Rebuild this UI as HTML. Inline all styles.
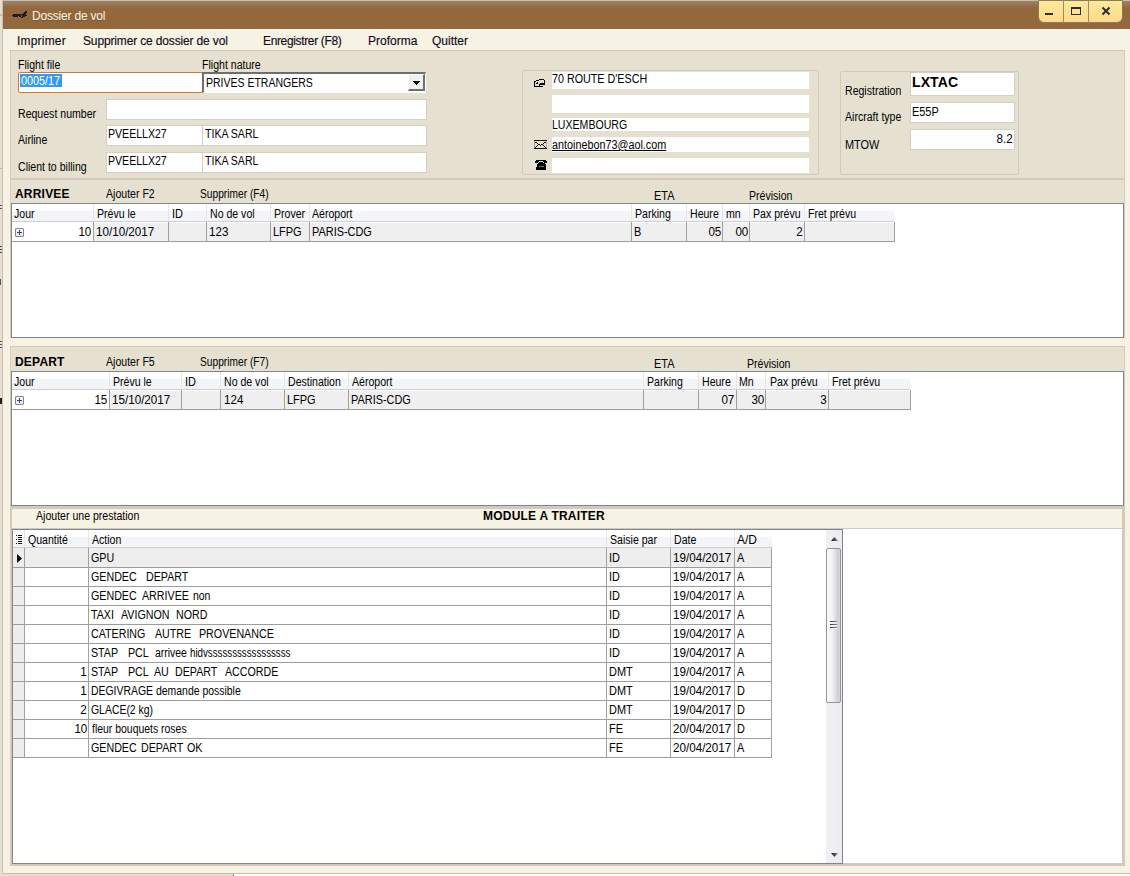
<!DOCTYPE html><html><head><meta charset="utf-8"><style>
html,body{margin:0;padding:0;width:1130px;height:876px;overflow:hidden;background:#E6E0D1;}
body{position:relative;font-family:'Liberation Sans', sans-serif;color:#000;}
div,span,svg{position:absolute;}
span{white-space:pre;}
</style></head><body>
<div style="left:2px;top:0px;width:1128px;height:874px;background:#C9BCB1"></div>
<div style="left:3px;top:1px;width:1127px;height:872px;background:#F8F2E2"></div>
<div style="left:233px;top:874px;width:897px;height:2px;background:#fff;border-left:1px solid #7C8494"></div>
<div style="left:0px;top:205px;width:2px;height:1px;background:#555"></div>
<div style="left:0px;top:208px;width:2px;height:1px;background:#555"></div>
<div style="left:0px;top:246px;width:2px;height:1px;background:#444"></div>
<div style="left:0px;top:249px;width:2px;height:1px;background:#444"></div>
<div style="left:0px;top:252px;width:2px;height:1px;background:#444"></div>
<div style="left:0px;top:279px;width:1px;height:6px;background:#555"></div>
<div style="left:0px;top:341px;width:2px;height:1px;background:#555"></div>
<div style="left:0px;top:344px;width:2px;height:1px;background:#555"></div>
<div style="left:0px;top:347px;width:2px;height:1px;background:#555"></div>
<div style="left:0px;top:398px;width:2px;height:6px;background:#222"></div>
<div style="left:0px;top:168px;width:2px;height:1px;background:#BDB3A8"></div>
<div style="left:0px;top:14px;width:2px;height:2px;background:#C7BDB2"></div>
<div style="left:3px;top:1px;width:1127px;height:28px;background:linear-gradient(#9D8466 0px,#98775A 3px,#93683D 7px,#93683D 100%)"></div>
<span style="top:10px;font-size:12px;line-height:12px;color:#F6F0DE;letter-spacing:-0.2px;left:32px;-webkit-text-stroke:0.1px #F6F0DE;text-shadow:0 1px 1px rgba(60,40,20,0.35);">Dossier de vol</span>
<div style="left:25px;top:11px;width:2px;height:1px;background:#1E1E22"></div>
<div style="left:24px;top:12px;width:3px;height:1px;background:#1E1E22"></div>
<div style="left:23px;top:13px;width:3px;height:1px;background:#1E1E22"></div>
<div style="left:13px;top:14px;width:13px;height:1px;background:#1E1E22"></div>
<div style="left:12px;top:15px;width:9px;height:1px;background:#1E1E22"></div>
<div style="left:22px;top:15px;width:5px;height:1px;background:#1E1E22"></div>
<div style="left:13px;top:16px;width:5px;height:1px;background:#1E1E22"></div>
<div style="left:19px;top:16px;width:2px;height:1px;background:#1E1E22"></div>
<div style="left:22px;top:16px;width:3px;height:1px;background:#1E1E22"></div>
<div style="left:21px;top:17px;width:2px;height:1px;background:#1E1E22"></div>
<div style="left:1038px;top:0px;width:83px;height:21px;border:1px solid #8E7B5E;border-radius:0 0 6px 6px;background:linear-gradient(#FFEA9E,#FFD888);"></div>
<div style="left:1063px;top:0px;width:1px;height:23px;background:#9C8A68"></div>
<div style="left:1088px;top:0px;width:1px;height:23px;background:#9C8A68"></div>
<div style="left:1045px;top:13px;width:8px;height:2px;background:#2A2E3E"></div>
<div style="left:1071px;top:7px;width:8px;height:5px;border:1px solid #2A2E3E;border-top-width:2px"></div>
<svg style="left:1101px;top:6px" width="10" height="10" viewBox="0 0 10 10"><path d="M1.5 1.5 L8.5 8.5 M8.5 1.5 L1.5 8.5" stroke="#2A2E3E" stroke-width="2"/></svg>

<div style="left:3px;top:29px;width:1127px;height:21px;background:#F7F3E4;border-top:1px solid #F9F6EA;box-sizing:border-box"></div>
<span style="top:35px;font-size:12px;line-height:12px;color:#140A1A;letter-spacing:0.2px;left:17px;-webkit-text-stroke:0.15px #140A1A;">Imprimer</span>
<span style="top:35px;font-size:12px;line-height:12px;color:#140A1A;letter-spacing:-0.15px;left:83px;-webkit-text-stroke:0.15px #140A1A;">Supprimer ce dossier de vol</span>
<span style="top:35px;font-size:12px;line-height:12px;color:#140A1A;letter-spacing:-0.35px;left:263px;-webkit-text-stroke:0.15px #140A1A;">Enregistrer (F8)</span>
<span style="top:35px;font-size:12px;line-height:12px;color:#140A1A;left:368px;-webkit-text-stroke:0.15px #140A1A;">Proforma</span>
<span style="top:35px;font-size:12px;line-height:12px;color:#140A1A;left:432px;-webkit-text-stroke:0.15px #140A1A;">Quitter</span>
<div style="left:10px;top:50px;width:1115px;height:128px;background:#E6E0D1;border-top:1px solid #CFC5BA;border-left:1px solid #D5CCC1;border-right:1px solid #D5CCC1;box-sizing:border-box"></div>
<div style="left:10px;top:178px;width:1115px;height:2px;background:#D3C9BD"></div>
<span style="top:59px;font-size:12px;line-height:12px;left:18px;transform:scaleX(0.88);transform-origin:left;">Flight file</span>
<span style="top:59px;font-size:12px;line-height:12px;left:202px;transform:scaleX(0.88);transform-origin:left;">Flight nature</span>
<div style="left:18px;top:72px;width:185px;height:21px;background:#fff;border:1px solid #D27A2C;box-sizing:border-box;border-radius:2px"></div>
<div style="left:20px;top:74px;width:42px;height:13px;background:#3399FF"></div>
<span style="top:75px;font-size:12px;line-height:12px;color:#fff;left:21px;transform:scaleX(0.9);transform-origin:left;">0005/17</span>
<div style="left:202px;top:72px;width:224px;height:21px;background:#fff;border-top:2px solid #6E6E6E;border-left:2px solid #6E6E6E;border-right:1px solid #fff;border-bottom:1px solid #fff;box-sizing:border-box"></div>
<div style="left:408px;top:74px;width:17px;height:17px;background:#EFEFEF;border-right:2px solid #6E6E6E;border-bottom:2px solid #6E6E6E;border-left:1px solid #fff;border-top:1px solid #fff;box-sizing:border-box"></div>
<svg style="left:413px;top:81px" width="7" height="4" viewBox="0 0 7 4" shape-rendering="crispEdges"><path d="M0 0h7v1h-7z M1 1h5v1h-5z M2 2h3v1h-3z M3 3h1v1h-1z" fill="#000"/></svg>
<span style="top:77px;font-size:12px;line-height:12px;left:206px;transform:scaleX(0.875);transform-origin:left;">PRIVES ETRANGERS</span>
<span style="top:108px;font-size:12px;line-height:12px;left:18px;transform:scaleX(0.88);transform-origin:left;">Request number</span>
<div style="left:106px;top:99px;width:321px;height:21px;background:#fff;border:1px solid #D6CEC2;box-sizing:border-box;"></div>
<span style="top:134px;font-size:12px;line-height:12px;left:18px;transform:scaleX(0.88);transform-origin:left;">Airline</span>
<div style="left:106px;top:125px;width:97px;height:21px;background:#fff;border:1px solid #D6CEC2;box-sizing:border-box;"></div>
<div style="left:202px;top:125px;width:225px;height:21px;background:#fff;border:1px solid #D6CEC2;box-sizing:border-box;"></div>
<span style="top:128px;font-size:12px;line-height:12px;left:108px;transform:scaleX(0.88);transform-origin:left;">PVEELLX27</span>
<span style="top:128px;font-size:12px;line-height:12px;left:205px;transform:scaleX(0.88);transform-origin:left;">TIKA SARL</span>
<span style="top:161px;font-size:12px;line-height:12px;left:18px;transform:scaleX(0.88);transform-origin:left;">Client to billing</span>
<div style="left:106px;top:152px;width:97px;height:21px;background:#fff;border:1px solid #D6CEC2;box-sizing:border-box;"></div>
<div style="left:202px;top:152px;width:225px;height:21px;background:#fff;border:1px solid #D6CEC2;box-sizing:border-box;"></div>
<span style="top:155px;font-size:12px;line-height:12px;left:108px;transform:scaleX(0.88);transform-origin:left;">PVEELLX27</span>
<span style="top:155px;font-size:12px;line-height:12px;left:205px;transform:scaleX(0.88);transform-origin:left;">TIKA SARL</span>
<div style="left:522px;top:70px;width:297px;height:105px;border:1px solid #D2C9BC;border-radius:2px;box-sizing:border-box"></div>
<div style="left:552px;top:72px;width:257px;height:17px;background:#fff"></div>
<div style="left:552px;top:95px;width:257px;height:18px;background:#fff"></div>
<div style="left:552px;top:118px;width:257px;height:13px;background:#fff"></div>
<div style="left:552px;top:137px;width:257px;height:15px;background:#fff"></div>
<div style="left:552px;top:158px;width:257px;height:15px;background:#fff"></div>
<span style="top:73px;font-size:12px;line-height:12px;left:552px;transform:scaleX(0.895);transform-origin:left;">70 ROUTE D'ESCH</span>
<span style="top:119px;font-size:12px;line-height:12px;left:552px;transform:scaleX(0.88);transform-origin:left;">LUXEMBOURG</span>
<span style="top:139px;font-size:12px;line-height:12px;left:552px;transform:scaleX(0.9);transform-origin:left;text-decoration:underline;">antoinebon73@aol.com</span>
<svg style="left:533px;top:78px" width="13" height="10" viewBox="0 0 13 10" shape-rendering="crispEdges">
<path d="M1 3h2v1h-2z M3 2h3v1h-3z M6 1h5v1h-5z M11 2h1v5h-1z M1 4h1v4h-1z M1 8h9v1h-9z M7 5h4v2h-4z M6 6h1v2h-1z M3 5h2v1h-2z M4 4h1v1h-1z" fill="#000"/>
</svg>
<svg style="left:0;top:0" width="1130" height="876" shape-rendering="crispEdges"><path d="M534 140h13v1h-13zM534 148h13v1h-13zM535 142h2v1h-2zM544 142h2v1h-2zM537 143h1v1h-1zM543 143h1v1h-1zM538 144h2v1h-2zM541 144h2v1h-2zM537 145h1v1h-1zM540 145h1v1h-1zM543 145h1v1h-1zM536 146h1v1h-1zM544 146h1v1h-1zM535 147h1v1h-1zM545 147h1v1h-1z" fill="#111"/></svg>
<svg style="left:0;top:0" width="1130" height="876" shape-rendering="crispEdges"><path d="M534 141h1v1h-1zM534 142h1v1h-1zM534 143h1v1h-1zM534 144h1v1h-1zM534 145h1v1h-1zM534 146h1v1h-1zM534 147h1v1h-1z" fill="#A8A29A"/></svg>
<svg style="left:0;top:0" width="1130" height="876" shape-rendering="crispEdges"><path d="M546 141h1v1h-1zM546 142h1v1h-1zM546 143h1v1h-1zM546 144h1v1h-1zM546 145h1v1h-1zM546 146h1v1h-1zM546 147h1v1h-1z" fill="#C8A8A0"/></svg>
<svg style="left:0;top:0" width="1130" height="876" shape-rendering="crispEdges"><path d="M536 160h10v1h-10zM535 161h4v1h-4zM543 161h4v1h-4zM535 162h3v1h-3zM539 162h4v1h-4zM544 162h3v1h-3zM538 163h7v1h-7zM537 164h9v1h-9zM537 165h9v1h-9zM537 166h2v1h-2zM544 166h2v1h-2zM536 167h10v1h-10zM536 168h10v1h-10zM536 169h10v1h-10z" fill="#000"/></svg>
<svg style="left:0;top:0" width="1130" height="876" shape-rendering="crispEdges"><path d="M539 166h5v1h-5z" fill="#6A7A6A"/></svg>
<div style="left:840px;top:71px;width:179px;height:104px;border:1px solid #D2C9BC;border-radius:2px;box-sizing:border-box"></div>
<span style="top:85px;font-size:12px;line-height:12px;left:845px;transform:scaleX(0.88);transform-origin:left;">Registration</span>
<span style="top:111px;font-size:12px;line-height:12px;left:845px;transform:scaleX(0.88);transform-origin:left;">Aircraft type</span>
<span style="top:139px;font-size:12px;line-height:12px;left:845px;transform:scaleX(0.91);transform-origin:left;">MTOW</span>
<div style="left:910px;top:72px;width:105px;height:24px;background:#fff;border:1px solid #D6CEC2;box-sizing:border-box;"></div>
<div style="left:910px;top:102px;width:105px;height:21px;background:#fff;border:1px solid #D6CEC2;box-sizing:border-box;"></div>
<div style="left:910px;top:129px;width:105px;height:21px;background:#fff;border:1px solid #D6CEC2;box-sizing:border-box;"></div>
<span style="top:75px;font-size:14px;line-height:14px;font-weight:bold;letter-spacing:0.1px;left:912px;">LXTAC</span>
<span style="top:106px;font-size:12px;line-height:12px;left:912px;transform:scaleX(0.91);transform-origin:left;">E55P</span>
<span style="top:133px;font-size:12px;line-height:12px;right:117px;transform:scaleX(0.97);transform-origin:right;">8.2</span>
<div style="left:10px;top:180px;width:1115px;height:158px;background:#E6E0D1;border-left:1px solid #D5CCC1;border-right:1px solid #D5CCC1;box-sizing:border-box"></div>
<span style="top:188px;font-size:12px;line-height:12px;font-weight:bold;letter-spacing:0.2px;left:15px;">ARRIVEE</span>
<span style="top:188px;font-size:12px;line-height:12px;left:106px;transform:scaleX(0.88);transform-origin:left;">Ajouter F2</span>
<span style="top:188px;font-size:12px;line-height:12px;left:200px;transform:scaleX(0.85);transform-origin:left;">Supprimer (F4)</span>
<span style="top:190px;font-size:12px;line-height:12px;left:654px;transform:scaleX(0.91);transform-origin:left;">ETA</span>
<span style="top:190px;font-size:12px;line-height:12px;left:749px;transform:scaleX(0.88);transform-origin:left;">Prévision</span>
<div style="left:11px;top:203px;width:1113px;height:135px;background:#fff;border:1px solid #7E8494;box-sizing:border-box"></div>
<div style="left:12px;top:204px;width:882px;height:17px;background:linear-gradient(#FFFFFF 0%,#FFFFFF 36%,#F4F5F8 44%,#F3F4F7 100%);border-bottom:1px solid #CFCFCF"></div>
<div style="left:93px;top:204px;width:1px;height:17px;background:#E6E6E6"></div>
<div style="left:168px;top:204px;width:1px;height:17px;background:#E6E6E6"></div>
<div style="left:206px;top:204px;width:1px;height:17px;background:#E6E6E6"></div>
<div style="left:270px;top:204px;width:1px;height:17px;background:#E6E6E6"></div>
<div style="left:309px;top:204px;width:1px;height:17px;background:#E6E6E6"></div>
<div style="left:631px;top:204px;width:1px;height:17px;background:#E6E6E6"></div>
<div style="left:686px;top:204px;width:1px;height:17px;background:#E6E6E6"></div>
<div style="left:722px;top:204px;width:1px;height:17px;background:#E6E6E6"></div>
<div style="left:749px;top:204px;width:1px;height:17px;background:#E6E6E6"></div>
<div style="left:804px;top:204px;width:1px;height:17px;background:#E6E6E6"></div>
<span style="top:208px;font-size:12px;line-height:12px;left:14px;transform:scaleX(0.88);transform-origin:left;">Jour</span>
<span style="top:208px;font-size:12px;line-height:12px;left:97px;transform:scaleX(0.88);transform-origin:left;">Prévu le</span>
<span style="top:208px;font-size:12px;line-height:12px;left:172px;transform:scaleX(0.91);transform-origin:left;">ID</span>
<span style="top:208px;font-size:12px;line-height:12px;left:210px;transform:scaleX(0.88);transform-origin:left;">No de vol</span>
<span style="top:208px;font-size:12px;line-height:12px;left:274px;transform:scaleX(0.88);transform-origin:left;">Prover</span>
<span style="top:208px;font-size:12px;line-height:12px;left:312px;transform:scaleX(0.88);transform-origin:left;">Aéroport</span>
<span style="top:208px;font-size:12px;line-height:12px;left:635px;transform:scaleX(0.88);transform-origin:left;">Parking</span>
<span style="top:208px;font-size:12px;line-height:12px;left:690px;transform:scaleX(0.88);transform-origin:left;">Heure</span>
<span style="top:208px;font-size:12px;line-height:12px;left:726px;transform:scaleX(0.88);transform-origin:left;">mn</span>
<span style="top:208px;font-size:12px;line-height:12px;left:753px;transform:scaleX(0.88);transform-origin:left;">Pax prévu</span>
<span style="top:208px;font-size:12px;line-height:12px;left:808px;transform:scaleX(0.88);transform-origin:left;">Fret prévu</span>
<div style="left:12px;top:222px;width:882px;height:19px;background:#EFEFEF;border-bottom:1px solid #9C9C9C;border-top:1px solid #fff;box-sizing:content-box;height:18px"></div>
<div style="left:12px;top:222px;width:81px;height:19px;background:#fff;border-bottom:1px solid #9C9C9C"></div>
<div style="left:93px;top:222px;width:1px;height:20px;background:#A0A0A0"></div>
<div style="left:168px;top:222px;width:1px;height:20px;background:#A0A0A0"></div>
<div style="left:206px;top:222px;width:1px;height:20px;background:#A0A0A0"></div>
<div style="left:270px;top:222px;width:1px;height:20px;background:#A0A0A0"></div>
<div style="left:309px;top:222px;width:1px;height:20px;background:#A0A0A0"></div>
<div style="left:631px;top:222px;width:1px;height:20px;background:#A0A0A0"></div>
<div style="left:686px;top:222px;width:1px;height:20px;background:#A0A0A0"></div>
<div style="left:722px;top:222px;width:1px;height:20px;background:#A0A0A0"></div>
<div style="left:749px;top:222px;width:1px;height:20px;background:#A0A0A0"></div>
<div style="left:804px;top:222px;width:1px;height:20px;background:#A0A0A0"></div>
<div style="left:894px;top:222px;width:1px;height:20px;background:#A0A0A0"></div>
<div style="left:15px;top:228px;width:9px;height:9px;background:linear-gradient(#fff,#E4E4E4);border:1px solid #858585;border-radius:1px;box-sizing:border-box"></div>
<div style="left:17px;top:232px;width:5px;height:1px;background:#28459A"></div>
<div style="left:19px;top:230px;width:1px;height:5px;background:#28459A"></div>
<span style="top:226px;font-size:12px;line-height:12px;right:1039px;transform:scaleX(0.97);transform-origin:right;">10</span>
<span style="top:226px;font-size:12px;line-height:12px;left:96px;transform:scaleX(0.97);transform-origin:left;">10/10/2017</span>
<span style="top:226px;font-size:12px;line-height:12px;left:209px;transform:scaleX(0.97);transform-origin:left;">123</span>
<span style="top:226px;font-size:12px;line-height:12px;left:273px;transform:scaleX(0.91);transform-origin:left;">LFPG</span>
<span style="top:226px;font-size:12px;line-height:12px;left:312px;transform:scaleX(0.91);transform-origin:left;">PARIS-CDG</span>
<span style="top:226px;font-size:12px;line-height:12px;left:634px;transform:scaleX(0.91);transform-origin:left;">B</span>
<span style="top:226px;font-size:12px;line-height:12px;right:409px;transform:scaleX(0.97);transform-origin:right;">05</span>
<span style="top:226px;font-size:12px;line-height:12px;right:382px;transform:scaleX(0.97);transform-origin:right;">00</span>
<span style="top:226px;font-size:12px;line-height:12px;right:327px;transform:scaleX(0.97);transform-origin:right;">2</span>
<div style="left:10px;top:338px;width:1115px;height:8px;background:#F8F2E2"></div>
<div style="left:10px;top:346px;width:1115px;height:1px;background:#D3C9BD"></div>
<div style="left:10px;top:347px;width:1115px;height:159px;background:#E6E0D1;border-left:1px solid #D5CCC1;border-right:1px solid #D5CCC1;box-sizing:border-box"></div>
<span style="top:356px;font-size:12px;line-height:12px;font-weight:bold;letter-spacing:0.2px;left:15px;">DEPART</span>
<span style="top:356px;font-size:12px;line-height:12px;left:106px;transform:scaleX(0.88);transform-origin:left;">Ajouter F5</span>
<span style="top:356px;font-size:12px;line-height:12px;left:200px;transform:scaleX(0.85);transform-origin:left;">Supprimer (F7)</span>
<span style="top:358px;font-size:12px;line-height:12px;left:654px;transform:scaleX(0.91);transform-origin:left;">ETA</span>
<span style="top:358px;font-size:12px;line-height:12px;left:747px;transform:scaleX(0.88);transform-origin:left;">Prévision</span>
<div style="left:11px;top:371px;width:1113px;height:135px;background:#fff;border:1px solid #7E8494;box-sizing:border-box"></div>
<div style="left:12px;top:372px;width:898px;height:17px;background:linear-gradient(#FFFFFF 0%,#FFFFFF 36%,#F4F5F8 44%,#F3F4F7 100%);border-bottom:1px solid #CFCFCF"></div>
<div style="left:109px;top:372px;width:1px;height:17px;background:#E6E6E6"></div>
<div style="left:181px;top:372px;width:1px;height:17px;background:#E6E6E6"></div>
<div style="left:220px;top:372px;width:1px;height:17px;background:#E6E6E6"></div>
<div style="left:284px;top:372px;width:1px;height:17px;background:#E6E6E6"></div>
<div style="left:348px;top:372px;width:1px;height:17px;background:#E6E6E6"></div>
<div style="left:643px;top:372px;width:1px;height:17px;background:#E6E6E6"></div>
<div style="left:698px;top:372px;width:1px;height:17px;background:#E6E6E6"></div>
<div style="left:736px;top:372px;width:1px;height:17px;background:#E6E6E6"></div>
<div style="left:765px;top:372px;width:1px;height:17px;background:#E6E6E6"></div>
<div style="left:828px;top:372px;width:1px;height:17px;background:#E6E6E6"></div>
<span style="top:376px;font-size:12px;line-height:12px;left:14px;transform:scaleX(0.88);transform-origin:left;">Jour</span>
<span style="top:376px;font-size:12px;line-height:12px;left:113px;transform:scaleX(0.88);transform-origin:left;">Prévu le</span>
<span style="top:376px;font-size:12px;line-height:12px;left:185px;transform:scaleX(0.91);transform-origin:left;">ID</span>
<span style="top:376px;font-size:12px;line-height:12px;left:224px;transform:scaleX(0.88);transform-origin:left;">No de vol</span>
<span style="top:376px;font-size:12px;line-height:12px;left:288px;transform:scaleX(0.88);transform-origin:left;">Destination</span>
<span style="top:376px;font-size:12px;line-height:12px;left:352px;transform:scaleX(0.88);transform-origin:left;">Aéroport</span>
<span style="top:376px;font-size:12px;line-height:12px;left:647px;transform:scaleX(0.88);transform-origin:left;">Parking</span>
<span style="top:376px;font-size:12px;line-height:12px;left:702px;transform:scaleX(0.88);transform-origin:left;">Heure</span>
<span style="top:376px;font-size:12px;line-height:12px;left:739px;transform:scaleX(0.88);transform-origin:left;">Mn</span>
<span style="top:376px;font-size:12px;line-height:12px;left:770px;transform:scaleX(0.88);transform-origin:left;">Pax prévu</span>
<span style="top:376px;font-size:12px;line-height:12px;left:832px;transform:scaleX(0.88);transform-origin:left;">Fret prévu</span>
<div style="left:12px;top:390px;width:898px;height:19px;background:#EFEFEF;border-bottom:1px solid #9C9C9C;border-top:1px solid #fff;box-sizing:content-box;height:18px"></div>
<div style="left:12px;top:390px;width:97px;height:19px;background:#fff;border-bottom:1px solid #9C9C9C"></div>
<div style="left:109px;top:390px;width:1px;height:20px;background:#A0A0A0"></div>
<div style="left:181px;top:390px;width:1px;height:20px;background:#A0A0A0"></div>
<div style="left:220px;top:390px;width:1px;height:20px;background:#A0A0A0"></div>
<div style="left:284px;top:390px;width:1px;height:20px;background:#A0A0A0"></div>
<div style="left:348px;top:390px;width:1px;height:20px;background:#A0A0A0"></div>
<div style="left:643px;top:390px;width:1px;height:20px;background:#A0A0A0"></div>
<div style="left:698px;top:390px;width:1px;height:20px;background:#A0A0A0"></div>
<div style="left:736px;top:390px;width:1px;height:20px;background:#A0A0A0"></div>
<div style="left:765px;top:390px;width:1px;height:20px;background:#A0A0A0"></div>
<div style="left:828px;top:390px;width:1px;height:20px;background:#A0A0A0"></div>
<div style="left:910px;top:390px;width:1px;height:20px;background:#A0A0A0"></div>
<div style="left:15px;top:396px;width:9px;height:9px;background:linear-gradient(#fff,#E4E4E4);border:1px solid #858585;border-radius:1px;box-sizing:border-box"></div>
<div style="left:17px;top:400px;width:5px;height:1px;background:#28459A"></div>
<div style="left:19px;top:398px;width:1px;height:5px;background:#28459A"></div>
<span style="top:394px;font-size:12px;line-height:12px;right:1023px;transform:scaleX(0.97);transform-origin:right;">15</span>
<span style="top:394px;font-size:12px;line-height:12px;left:112px;transform:scaleX(0.97);transform-origin:left;">15/10/2017</span>
<span style="top:394px;font-size:12px;line-height:12px;left:224px;transform:scaleX(0.97);transform-origin:left;">124</span>
<span style="top:394px;font-size:12px;line-height:12px;left:287px;transform:scaleX(0.91);transform-origin:left;">LFPG</span>
<span style="top:394px;font-size:12px;line-height:12px;left:351px;transform:scaleX(0.91);transform-origin:left;">PARIS-CDG</span>
<span style="top:394px;font-size:12px;line-height:12px;right:396px;transform:scaleX(0.97);transform-origin:right;">07</span>
<span style="top:394px;font-size:12px;line-height:12px;right:366px;transform:scaleX(0.97);transform-origin:right;">30</span>
<span style="top:394px;font-size:12px;line-height:12px;right:303px;transform:scaleX(0.97);transform-origin:right;">3</span>
<div style="left:10px;top:506px;width:1115px;height:3px;background:#D3C9BD"></div>
<div style="left:10px;top:509px;width:1115px;height:19px;background:#F7F3E4;border-left:2px solid #D3C9BD;border-right:3px solid #D3C9BD;box-sizing:border-box"></div>
<div style="left:10px;top:528px;width:1115px;height:2px;background:#D3C9BD"></div>
<div style="left:10px;top:529px;width:2px;height:337px;background:#D3C9BD"></div>
<div style="left:10px;top:864px;width:1115px;height:2px;background:#D3C9BD"></div>
<span style="top:510px;font-size:12px;line-height:12px;left:36px;transform:scaleX(0.88);transform-origin:left;">Ajouter une prestation</span>
<span style="top:510px;font-size:12px;line-height:12px;font-weight:bold;letter-spacing:0.22px;left:483px;">MODULE A TRAITER</span>
<div style="left:843px;top:529px;width:282px;height:337px;background:#fff;border-right:3px solid #D3C9BD;border-bottom:3px solid #D3C9BD;box-sizing:border-box"></div>
<div style="left:12px;top:529px;width:831px;height:335px;background:#fff;border:1px solid #7E8494;box-sizing:border-box"></div>
<div style="left:13px;top:530px;width:759px;height:18px;background:linear-gradient(#FFFFFF 0%,#FFFFFF 36%,#F4F5F8 44%,#F3F4F7 100%);border-bottom:1px solid #CFCFCF;box-sizing:border-box"></div>
<div style="left:24px;top:530px;width:1px;height:17px;background:#E6E6E6"></div>
<div style="left:88px;top:530px;width:1px;height:17px;background:#E6E6E6"></div>
<div style="left:606px;top:530px;width:1px;height:17px;background:#E6E6E6"></div>
<div style="left:670px;top:530px;width:1px;height:17px;background:#E6E6E6"></div>
<div style="left:734px;top:530px;width:1px;height:17px;background:#E6E6E6"></div>
<div style="left:18px;top:535px;width:4px;height:1px;background:#111"></div>
<div style="left:18px;top:537px;width:4px;height:1px;background:#111"></div>
<div style="left:18px;top:539px;width:4px;height:1px;background:#111"></div>
<div style="left:18px;top:541px;width:4px;height:1px;background:#111"></div>
<div style="left:18px;top:543px;width:4px;height:1px;background:#111"></div>
<div style="left:16px;top:535px;width:1px;height:1px;background:#111"></div>
<div style="left:16px;top:539px;width:1px;height:1px;background:#111"></div>
<div style="left:16px;top:543px;width:1px;height:1px;background:#111"></div>
<span style="top:534px;font-size:12px;line-height:12px;left:28px;transform:scaleX(0.88);transform-origin:left;">Quantité</span>
<span style="top:534px;font-size:12px;line-height:12px;left:92px;transform:scaleX(0.88);transform-origin:left;">Action</span>
<span style="top:534px;font-size:12px;line-height:12px;left:610px;transform:scaleX(0.88);transform-origin:left;">Saisie par</span>
<span style="top:534px;font-size:12px;line-height:12px;left:674px;transform:scaleX(0.88);transform-origin:left;">Date</span>
<span style="top:534px;font-size:12px;line-height:12px;left:737px;">A/D</span>
<div style="left:13px;top:548px;width:759px;height:20px;background:#EEEEEE;border-bottom:1px solid #9C9C9C;box-sizing:border-box"></div>
<div style="left:13px;top:548px;width:11px;height:19px;background:#EDEDED"></div>
<div style="left:24px;top:548px;width:1px;height:20px;background:#A0A0A0"></div>
<div style="left:88px;top:548px;width:1px;height:20px;background:#A0A0A0"></div>
<div style="left:606px;top:548px;width:1px;height:20px;background:#A0A0A0"></div>
<div style="left:670px;top:548px;width:1px;height:20px;background:#A0A0A0"></div>
<div style="left:734px;top:548px;width:1px;height:20px;background:#A0A0A0"></div>
<div style="left:771px;top:548px;width:1px;height:20px;background:#A0A0A0"></div>
<span style="top:552px;font-size:12px;line-height:12px;left:91px;transform:scaleX(0.89);transform-origin:left;">GPU</span>
<span style="top:552px;font-size:12px;line-height:12px;left:609px;transform:scaleX(0.91);transform-origin:left;">ID</span>
<span style="top:552px;font-size:12px;line-height:12px;left:673px;transform:scaleX(0.97);transform-origin:left;">19/04/2017</span>
<span style="top:552px;font-size:12px;line-height:12px;left:737px;transform:scaleX(0.91);transform-origin:left;">A</span>
<div style="left:13px;top:568px;width:759px;height:19px;background:#FFFFFF;border-bottom:1px solid #9C9C9C;box-sizing:border-box"></div>
<div style="left:13px;top:568px;width:11px;height:18px;background:#EDEDED"></div>
<div style="left:24px;top:568px;width:1px;height:19px;background:#A0A0A0"></div>
<div style="left:88px;top:568px;width:1px;height:19px;background:#A0A0A0"></div>
<div style="left:606px;top:568px;width:1px;height:19px;background:#A0A0A0"></div>
<div style="left:670px;top:568px;width:1px;height:19px;background:#A0A0A0"></div>
<div style="left:734px;top:568px;width:1px;height:19px;background:#A0A0A0"></div>
<div style="left:771px;top:568px;width:1px;height:19px;background:#A0A0A0"></div>
<span style="top:571px;font-size:12px;line-height:12px;left:91px;transform:scaleX(0.89);transform-origin:left;">GENDEC</span>
<span style="top:571px;font-size:12px;line-height:12px;left:146px;transform:scaleX(0.89);transform-origin:left;">DEPART</span>
<span style="top:571px;font-size:12px;line-height:12px;left:609px;transform:scaleX(0.91);transform-origin:left;">ID</span>
<span style="top:571px;font-size:12px;line-height:12px;left:673px;transform:scaleX(0.97);transform-origin:left;">19/04/2017</span>
<span style="top:571px;font-size:12px;line-height:12px;left:737px;transform:scaleX(0.91);transform-origin:left;">A</span>
<div style="left:13px;top:587px;width:759px;height:19px;background:#FFFFFF;border-bottom:1px solid #9C9C9C;box-sizing:border-box"></div>
<div style="left:13px;top:587px;width:11px;height:18px;background:#EDEDED"></div>
<div style="left:24px;top:587px;width:1px;height:19px;background:#A0A0A0"></div>
<div style="left:88px;top:587px;width:1px;height:19px;background:#A0A0A0"></div>
<div style="left:606px;top:587px;width:1px;height:19px;background:#A0A0A0"></div>
<div style="left:670px;top:587px;width:1px;height:19px;background:#A0A0A0"></div>
<div style="left:734px;top:587px;width:1px;height:19px;background:#A0A0A0"></div>
<div style="left:771px;top:587px;width:1px;height:19px;background:#A0A0A0"></div>
<span style="top:590px;font-size:12px;line-height:12px;left:91px;transform:scaleX(0.89);transform-origin:left;">GENDEC</span>
<span style="top:590px;font-size:12px;line-height:12px;left:142px;transform:scaleX(0.89);transform-origin:left;">ARRIVEE</span>
<span style="top:590px;font-size:12px;line-height:12px;left:193px;transform:scaleX(0.87);transform-origin:left;">non</span>
<span style="top:590px;font-size:12px;line-height:12px;left:609px;transform:scaleX(0.91);transform-origin:left;">ID</span>
<span style="top:590px;font-size:12px;line-height:12px;left:673px;transform:scaleX(0.97);transform-origin:left;">19/04/2017</span>
<span style="top:590px;font-size:12px;line-height:12px;left:737px;transform:scaleX(0.91);transform-origin:left;">A</span>
<div style="left:13px;top:606px;width:759px;height:19px;background:#FFFFFF;border-bottom:1px solid #9C9C9C;box-sizing:border-box"></div>
<div style="left:13px;top:606px;width:11px;height:18px;background:#EDEDED"></div>
<div style="left:24px;top:606px;width:1px;height:19px;background:#A0A0A0"></div>
<div style="left:88px;top:606px;width:1px;height:19px;background:#A0A0A0"></div>
<div style="left:606px;top:606px;width:1px;height:19px;background:#A0A0A0"></div>
<div style="left:670px;top:606px;width:1px;height:19px;background:#A0A0A0"></div>
<div style="left:734px;top:606px;width:1px;height:19px;background:#A0A0A0"></div>
<div style="left:771px;top:606px;width:1px;height:19px;background:#A0A0A0"></div>
<span style="top:609px;font-size:12px;line-height:12px;left:91px;transform:scaleX(0.89);transform-origin:left;">TAXI</span>
<span style="top:609px;font-size:12px;line-height:12px;left:121px;transform:scaleX(0.89);transform-origin:left;">AVIGNON</span>
<span style="top:609px;font-size:12px;line-height:12px;left:176px;transform:scaleX(0.89);transform-origin:left;">NORD</span>
<span style="top:609px;font-size:12px;line-height:12px;left:609px;transform:scaleX(0.91);transform-origin:left;">ID</span>
<span style="top:609px;font-size:12px;line-height:12px;left:673px;transform:scaleX(0.97);transform-origin:left;">19/04/2017</span>
<span style="top:609px;font-size:12px;line-height:12px;left:737px;transform:scaleX(0.91);transform-origin:left;">A</span>
<div style="left:13px;top:625px;width:759px;height:19px;background:#FFFFFF;border-bottom:1px solid #9C9C9C;box-sizing:border-box"></div>
<div style="left:13px;top:625px;width:11px;height:18px;background:#EDEDED"></div>
<div style="left:24px;top:625px;width:1px;height:19px;background:#A0A0A0"></div>
<div style="left:88px;top:625px;width:1px;height:19px;background:#A0A0A0"></div>
<div style="left:606px;top:625px;width:1px;height:19px;background:#A0A0A0"></div>
<div style="left:670px;top:625px;width:1px;height:19px;background:#A0A0A0"></div>
<div style="left:734px;top:625px;width:1px;height:19px;background:#A0A0A0"></div>
<div style="left:771px;top:625px;width:1px;height:19px;background:#A0A0A0"></div>
<span style="top:628px;font-size:12px;line-height:12px;left:91px;transform:scaleX(0.89);transform-origin:left;">CATERING</span>
<span style="top:628px;font-size:12px;line-height:12px;left:155px;transform:scaleX(0.89);transform-origin:left;">AUTRE</span>
<span style="top:628px;font-size:12px;line-height:12px;left:199px;transform:scaleX(0.89);transform-origin:left;">PROVENANCE</span>
<span style="top:628px;font-size:12px;line-height:12px;left:609px;transform:scaleX(0.91);transform-origin:left;">ID</span>
<span style="top:628px;font-size:12px;line-height:12px;left:673px;transform:scaleX(0.97);transform-origin:left;">19/04/2017</span>
<span style="top:628px;font-size:12px;line-height:12px;left:737px;transform:scaleX(0.91);transform-origin:left;">A</span>
<div style="left:13px;top:644px;width:759px;height:19px;background:#FFFFFF;border-bottom:1px solid #9C9C9C;box-sizing:border-box"></div>
<div style="left:13px;top:644px;width:11px;height:18px;background:#EDEDED"></div>
<div style="left:24px;top:644px;width:1px;height:19px;background:#A0A0A0"></div>
<div style="left:88px;top:644px;width:1px;height:19px;background:#A0A0A0"></div>
<div style="left:606px;top:644px;width:1px;height:19px;background:#A0A0A0"></div>
<div style="left:670px;top:644px;width:1px;height:19px;background:#A0A0A0"></div>
<div style="left:734px;top:644px;width:1px;height:19px;background:#A0A0A0"></div>
<div style="left:771px;top:644px;width:1px;height:19px;background:#A0A0A0"></div>
<span style="top:647px;font-size:12px;line-height:12px;left:91px;transform:scaleX(0.89);transform-origin:left;">STAP</span>
<span style="top:647px;font-size:12px;line-height:12px;left:128px;transform:scaleX(0.89);transform-origin:left;">PCL</span>
<span style="top:647px;font-size:12px;line-height:12px;left:155px;transform:scaleX(0.87);transform-origin:left;">arrivee</span>
<span style="top:647px;font-size:12px;line-height:12px;left:190px;transform:scaleX(0.81);transform-origin:left;">hidvsssssssssssssssss</span>
<span style="top:647px;font-size:12px;line-height:12px;left:609px;transform:scaleX(0.91);transform-origin:left;">ID</span>
<span style="top:647px;font-size:12px;line-height:12px;left:673px;transform:scaleX(0.97);transform-origin:left;">19/04/2017</span>
<span style="top:647px;font-size:12px;line-height:12px;left:737px;transform:scaleX(0.91);transform-origin:left;">A</span>
<div style="left:13px;top:663px;width:759px;height:19px;background:#FFFFFF;border-bottom:1px solid #9C9C9C;box-sizing:border-box"></div>
<div style="left:13px;top:663px;width:11px;height:18px;background:#EDEDED"></div>
<div style="left:24px;top:663px;width:1px;height:19px;background:#A0A0A0"></div>
<div style="left:88px;top:663px;width:1px;height:19px;background:#A0A0A0"></div>
<div style="left:606px;top:663px;width:1px;height:19px;background:#A0A0A0"></div>
<div style="left:670px;top:663px;width:1px;height:19px;background:#A0A0A0"></div>
<div style="left:734px;top:663px;width:1px;height:19px;background:#A0A0A0"></div>
<div style="left:771px;top:663px;width:1px;height:19px;background:#A0A0A0"></div>
<span style="top:666px;font-size:12px;line-height:12px;right:1043px;transform:scaleX(0.97);transform-origin:right;">1</span>
<span style="top:666px;font-size:12px;line-height:12px;left:91px;transform:scaleX(0.89);transform-origin:left;">STAP</span>
<span style="top:666px;font-size:12px;line-height:12px;left:128px;transform:scaleX(0.89);transform-origin:left;">PCL</span>
<span style="top:666px;font-size:12px;line-height:12px;left:154px;transform:scaleX(0.89);transform-origin:left;">AU</span>
<span style="top:666px;font-size:12px;line-height:12px;left:175px;transform:scaleX(0.89);transform-origin:left;">DEPART</span>
<span style="top:666px;font-size:12px;line-height:12px;left:225px;transform:scaleX(0.89);transform-origin:left;">ACCORDE</span>
<span style="top:666px;font-size:12px;line-height:12px;left:609px;transform:scaleX(0.91);transform-origin:left;">DMT</span>
<span style="top:666px;font-size:12px;line-height:12px;left:673px;transform:scaleX(0.97);transform-origin:left;">19/04/2017</span>
<span style="top:666px;font-size:12px;line-height:12px;left:737px;transform:scaleX(0.91);transform-origin:left;">A</span>
<div style="left:13px;top:682px;width:759px;height:19px;background:#FFFFFF;border-bottom:1px solid #9C9C9C;box-sizing:border-box"></div>
<div style="left:13px;top:682px;width:11px;height:18px;background:#EDEDED"></div>
<div style="left:24px;top:682px;width:1px;height:19px;background:#A0A0A0"></div>
<div style="left:88px;top:682px;width:1px;height:19px;background:#A0A0A0"></div>
<div style="left:606px;top:682px;width:1px;height:19px;background:#A0A0A0"></div>
<div style="left:670px;top:682px;width:1px;height:19px;background:#A0A0A0"></div>
<div style="left:734px;top:682px;width:1px;height:19px;background:#A0A0A0"></div>
<div style="left:771px;top:682px;width:1px;height:19px;background:#A0A0A0"></div>
<span style="top:685px;font-size:12px;line-height:12px;right:1043px;transform:scaleX(0.97);transform-origin:right;">1</span>
<span style="top:685px;font-size:12px;line-height:12px;left:91px;transform:scaleX(0.87);transform-origin:left;">DEGIVRAGE</span>
<span style="top:685px;font-size:12px;line-height:12px;left:156px;transform:scaleX(0.87);transform-origin:left;">demande possible</span>
<span style="top:685px;font-size:12px;line-height:12px;left:609px;transform:scaleX(0.91);transform-origin:left;">DMT</span>
<span style="top:685px;font-size:12px;line-height:12px;left:673px;transform:scaleX(0.97);transform-origin:left;">19/04/2017</span>
<span style="top:685px;font-size:12px;line-height:12px;left:737px;transform:scaleX(0.91);transform-origin:left;">D</span>
<div style="left:13px;top:701px;width:759px;height:19px;background:#FFFFFF;border-bottom:1px solid #9C9C9C;box-sizing:border-box"></div>
<div style="left:13px;top:701px;width:11px;height:18px;background:#EDEDED"></div>
<div style="left:24px;top:701px;width:1px;height:19px;background:#A0A0A0"></div>
<div style="left:88px;top:701px;width:1px;height:19px;background:#A0A0A0"></div>
<div style="left:606px;top:701px;width:1px;height:19px;background:#A0A0A0"></div>
<div style="left:670px;top:701px;width:1px;height:19px;background:#A0A0A0"></div>
<div style="left:734px;top:701px;width:1px;height:19px;background:#A0A0A0"></div>
<div style="left:771px;top:701px;width:1px;height:19px;background:#A0A0A0"></div>
<span style="top:704px;font-size:12px;line-height:12px;right:1043px;transform:scaleX(0.97);transform-origin:right;">2</span>
<span style="top:704px;font-size:12px;line-height:12px;left:91px;transform:scaleX(0.87);transform-origin:left;">GLACE(2 kg)</span>
<span style="top:704px;font-size:12px;line-height:12px;left:609px;transform:scaleX(0.91);transform-origin:left;">DMT</span>
<span style="top:704px;font-size:12px;line-height:12px;left:673px;transform:scaleX(0.97);transform-origin:left;">19/04/2017</span>
<span style="top:704px;font-size:12px;line-height:12px;left:737px;transform:scaleX(0.91);transform-origin:left;">D</span>
<div style="left:13px;top:720px;width:759px;height:19px;background:#FFFFFF;border-bottom:1px solid #9C9C9C;box-sizing:border-box"></div>
<div style="left:13px;top:720px;width:11px;height:18px;background:#EDEDED"></div>
<div style="left:24px;top:720px;width:1px;height:19px;background:#A0A0A0"></div>
<div style="left:88px;top:720px;width:1px;height:19px;background:#A0A0A0"></div>
<div style="left:606px;top:720px;width:1px;height:19px;background:#A0A0A0"></div>
<div style="left:670px;top:720px;width:1px;height:19px;background:#A0A0A0"></div>
<div style="left:734px;top:720px;width:1px;height:19px;background:#A0A0A0"></div>
<div style="left:771px;top:720px;width:1px;height:19px;background:#A0A0A0"></div>
<span style="top:723px;font-size:12px;line-height:12px;right:1043px;transform:scaleX(0.97);transform-origin:right;">10</span>
<span style="top:723px;font-size:12px;line-height:12px;left:92px;transform:scaleX(0.87);transform-origin:left;">fleur bouquets roses</span>
<span style="top:723px;font-size:12px;line-height:12px;left:609px;transform:scaleX(0.91);transform-origin:left;">FE</span>
<span style="top:723px;font-size:12px;line-height:12px;left:673px;transform:scaleX(0.97);transform-origin:left;">20/04/2017</span>
<span style="top:723px;font-size:12px;line-height:12px;left:737px;transform:scaleX(0.91);transform-origin:left;">D</span>
<div style="left:13px;top:739px;width:759px;height:19px;background:#FFFFFF;border-bottom:1px solid #9C9C9C;box-sizing:border-box"></div>
<div style="left:13px;top:739px;width:11px;height:18px;background:#EDEDED"></div>
<div style="left:24px;top:739px;width:1px;height:19px;background:#A0A0A0"></div>
<div style="left:88px;top:739px;width:1px;height:19px;background:#A0A0A0"></div>
<div style="left:606px;top:739px;width:1px;height:19px;background:#A0A0A0"></div>
<div style="left:670px;top:739px;width:1px;height:19px;background:#A0A0A0"></div>
<div style="left:734px;top:739px;width:1px;height:19px;background:#A0A0A0"></div>
<div style="left:771px;top:739px;width:1px;height:19px;background:#A0A0A0"></div>
<span style="top:742px;font-size:12px;line-height:12px;left:91px;transform:scaleX(0.89);transform-origin:left;">GENDEC</span>
<span style="top:742px;font-size:12px;line-height:12px;left:141px;transform:scaleX(0.89);transform-origin:left;">DEPART</span>
<span style="top:742px;font-size:12px;line-height:12px;left:187px;transform:scaleX(0.89);transform-origin:left;">OK</span>
<span style="top:742px;font-size:12px;line-height:12px;left:609px;transform:scaleX(0.91);transform-origin:left;">FE</span>
<span style="top:742px;font-size:12px;line-height:12px;left:673px;transform:scaleX(0.97);transform-origin:left;">20/04/2017</span>
<span style="top:742px;font-size:12px;line-height:12px;left:737px;transform:scaleX(0.91);transform-origin:left;">A</span>
<svg style="left:17px;top:554px" width="6" height="10" viewBox="0 0 6 10"><path d="M0 0 L5 4.5 L0 9 Z" fill="#000"/></svg>
<div style="left:826px;top:530px;width:16px;height:333px;background:linear-gradient(90deg,#F1F1F3,#ECECEE)"></div>
<svg style="left:831px;top:537px" width="7" height="4" viewBox="0 0 7 4"><defs><linearGradient id="ag" x1="0" x2="1"><stop offset="0" stop-color="#111"/><stop offset="1" stop-color="#888"/></linearGradient></defs><path d="M0 4 L3.5 0 L7 4 Z" fill="url(#ag)"/></svg>
<svg style="left:831px;top:853px" width="7" height="4" viewBox="0 0 7 4"><path d="M0 0 L3.5 4 L7 0 Z" fill="url(#ag)"/></svg>
<div style="left:826px;top:548px;width:15px;height:155px;background:linear-gradient(90deg,#FBFBFB 0%,#F0F0F2 45%,#CDCDD5 85%,#D8D8DE 100%);border:1px solid #949494;border-radius:2px;box-sizing:border-box"></div>
<div style="left:830px;top:621px;width:7px;height:1px;background:linear-gradient(90deg,#333,#888)"></div>
<div style="left:830px;top:622px;width:7px;height:1px;background:#F4F4F6"></div>
<div style="left:830px;top:624px;width:7px;height:1px;background:linear-gradient(90deg,#333,#888)"></div>
<div style="left:830px;top:625px;width:7px;height:1px;background:#F4F4F6"></div>
<div style="left:830px;top:627px;width:7px;height:1px;background:linear-gradient(90deg,#333,#888)"></div>
<div style="left:830px;top:628px;width:7px;height:1px;background:#F4F4F6"></div>
</body></html>
